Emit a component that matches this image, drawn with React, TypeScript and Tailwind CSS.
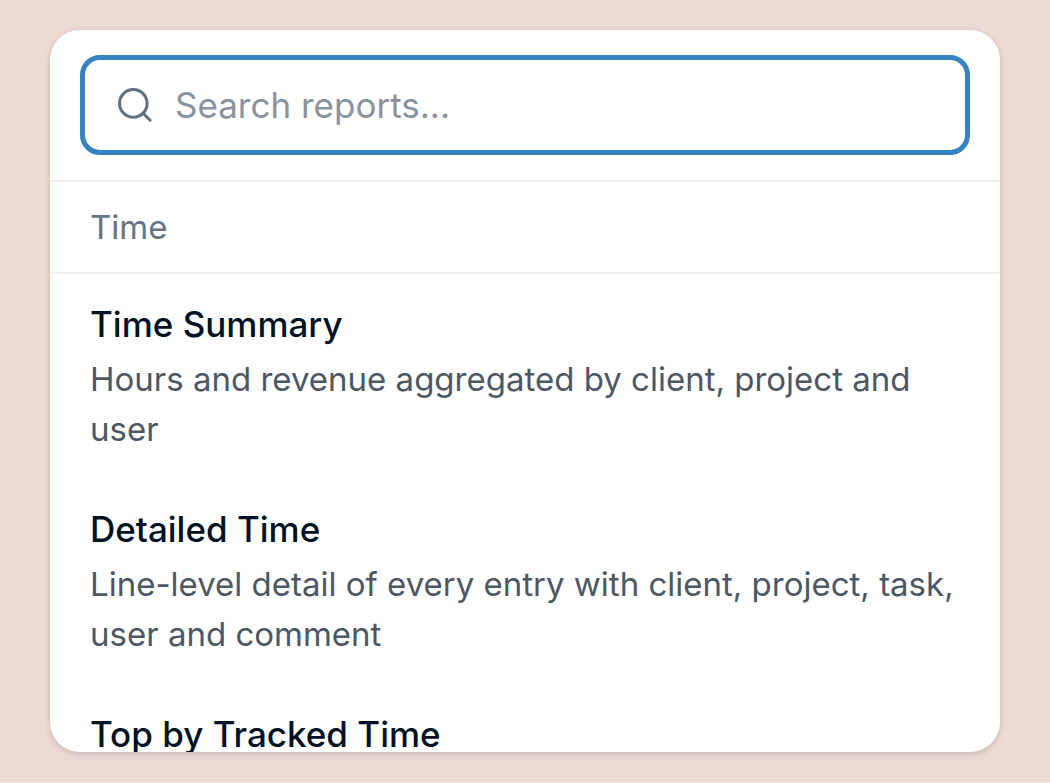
import React, { useState } from 'react';

interface Report {
  name: string;
  description: string;
}

interface ReportGroup {
  label: string;
  reports: Report[];
}

const groups: ReportGroup[] = [
  {
    label: 'Time',
    reports: [
      { name: 'Time Summary', description: 'Hours and revenue aggregated by client, project and user' },
      { name: 'Detailed Time', description: 'Line-level detail of every entry with client, project, task, user and comment' },
      { name: 'Top by Tracked Time', description: '' },
    ],
  },
];

const SearchIcon = () => (
  <svg
    viewBox="0 0 36 36"
    fill="none"
    stroke="currentColor"
    strokeWidth="3"
    strokeLinecap="round"
    className="h-9 w-9 shrink-0 text-[#61717f]"
    aria-hidden="true"
  >
    <circle cx="16.3" cy="16.4" r="13.8" />
    <path d="M26.1 26.2L33.1 33.2" />
  </svg>
);

export default function App() {
  const [query, setQuery] = useState('');

  const matches = (report: Report) => report.name.toLowerCase().includes(query.trim().toLowerCase());

  return (
    <main className="h-screen border-b border-[#fbe8e1] bg-[#ecd9d3] px-[50px] py-[30px] font-['Inter',sans-serif]">
      <div className="flex h-full flex-col overflow-hidden rounded-[30px] bg-white shadow-[0_2px_6px_rgba(0,0,0,0.15)]">
        <div className="border-b-2 border-[#eeefef] px-[30px] py-[25px]">
          <label className="flex h-[100px] items-center gap-[22px] rounded-[20px] border-[5px] border-[#3783c1] px-8">
            <SearchIcon />
            <input
              type="text"
              aria-label="Search reports"
              placeholder="Search reports..."
              value={query}
              onChange={(e) => setQuery(e.target.value)}
              className="w-full min-w-0 bg-transparent text-[35px] text-[#001223] outline-none placeholder:text-[#8b929f]"
            />
          </label>
        </div>

        <div className="min-h-0 flex-1 overflow-hidden">
          {groups.map((group) => (
            <section key={group.label}>
              <h2 className="border-b-2 border-[#eeefef] px-10 py-5 text-[33px] leading-[50px] text-[#647482]">
                {group.label}
              </h2>
              <ul>
                {group.reports.filter(matches).map((report) => (
                  <li key={report.name}>
                    <a href="#" className="block px-10 py-[25px]">
                      <h3 className="mb-[5px] text-[35px] leading-[50px] font-medium text-[#001223]">{report.name}</h3>
                      <p className="text-[33px] leading-[50px] text-[#4d5763]">{report.description}</p>
                    </a>
                  </li>
                ))}
              </ul>
            </section>
          ))}
        </div>
      </div>
    </main>
  );
}
